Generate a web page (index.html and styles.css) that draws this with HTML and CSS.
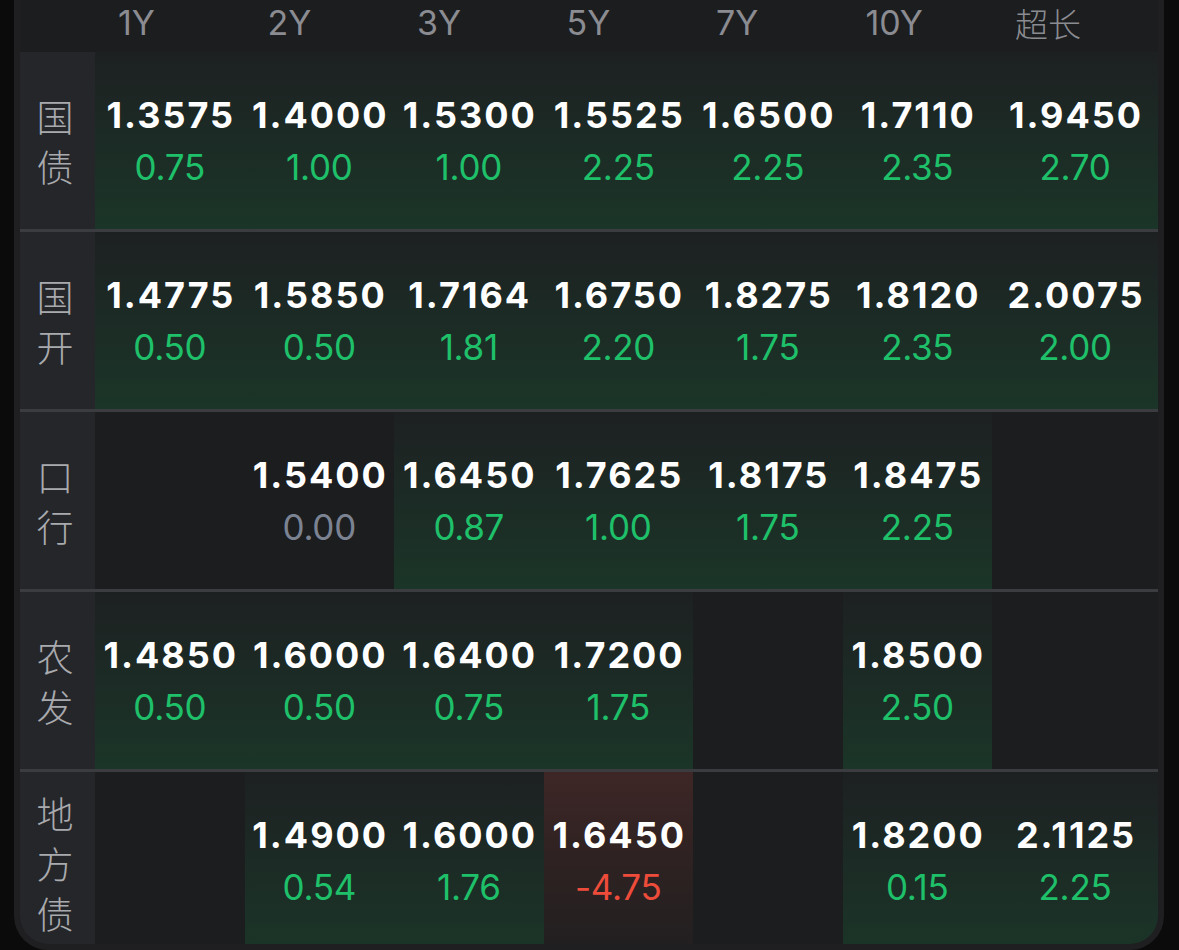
FILE: index.html
```html
<!DOCTYPE html>
<html lang="zh-CN">
<head>
<meta charset="utf-8">
<title>利率债收益率</title>
<link rel="stylesheet" href="styles.css">
</head>
<body>
<div class="card">
  <div class="head">
    <div class="hcell hlabel"></div>
    <div class="hcell">1Y</div>
    <div class="hcell">2Y</div>
    <div class="hcell">3Y</div>
    <div class="hcell">5Y</div>
    <div class="hcell">7Y</div>
    <div class="hcell">10Y</div>
    <div class="hcell cjk">超长</div>
  </div>

  <div class="row">
    <div class="label"><span>国</span><span>债</span></div>
    <div class="cell up"><span class="v">1.3575</span><span class="c pos">0.75</span></div>
    <div class="cell up"><span class="v">1.4000</span><span class="c pos">1.00</span></div>
    <div class="cell up"><span class="v">1.5300</span><span class="c pos">1.00</span></div>
    <div class="cell up"><span class="v">1.5525</span><span class="c pos">2.25</span></div>
    <div class="cell up"><span class="v">1.6500</span><span class="c pos">2.25</span></div>
    <div class="cell up"><span class="v">1.7110</span><span class="c pos">2.35</span></div>
    <div class="cell up"><span class="v">1.9450</span><span class="c pos">2.70</span></div>
  </div>

  <div class="row">
    <div class="label"><span>国</span><span>开</span></div>
    <div class="cell up"><span class="v">1.4775</span><span class="c pos">0.50</span></div>
    <div class="cell up"><span class="v">1.5850</span><span class="c pos">0.50</span></div>
    <div class="cell up"><span class="v">1.7164</span><span class="c pos">1.81</span></div>
    <div class="cell up"><span class="v">1.6750</span><span class="c pos">2.20</span></div>
    <div class="cell up"><span class="v">1.8275</span><span class="c pos">1.75</span></div>
    <div class="cell up"><span class="v">1.8120</span><span class="c pos">2.35</span></div>
    <div class="cell up"><span class="v">2.0075</span><span class="c pos">2.00</span></div>
  </div>

  <div class="row">
    <div class="label"><span>口</span><span>行</span></div>
    <div class="cell"></div>
    <div class="cell"><span class="v">1.5400</span><span class="c flat">0.00</span></div>
    <div class="cell up"><span class="v">1.6450</span><span class="c pos">0.87</span></div>
    <div class="cell up"><span class="v">1.7625</span><span class="c pos">1.00</span></div>
    <div class="cell up"><span class="v">1.8175</span><span class="c pos">1.75</span></div>
    <div class="cell up"><span class="v">1.8475</span><span class="c pos">2.25</span></div>
    <div class="cell"></div>
  </div>

  <div class="row">
    <div class="label"><span>农</span><span>发</span></div>
    <div class="cell up"><span class="v">1.4850</span><span class="c pos">0.50</span></div>
    <div class="cell up"><span class="v">1.6000</span><span class="c pos">0.50</span></div>
    <div class="cell up"><span class="v">1.6400</span><span class="c pos">0.75</span></div>
    <div class="cell up"><span class="v">1.7200</span><span class="c pos">1.75</span></div>
    <div class="cell"></div>
    <div class="cell up"><span class="v">1.8500</span><span class="c pos">2.50</span></div>
    <div class="cell"></div>
  </div>

  <div class="row last">
    <div class="label"><span>地</span><span>方</span><span>债</span></div>
    <div class="cell"></div>
    <div class="cell up"><span class="v">1.4900</span><span class="c pos">0.54</span></div>
    <div class="cell up"><span class="v">1.6000</span><span class="c pos">1.76</span></div>
    <div class="cell down"><span class="v">1.6450</span><span class="c neg">-4.75</span></div>
    <div class="cell"></div>
    <div class="cell up"><span class="v">1.8200</span><span class="c pos">0.15</span></div>
    <div class="cell up"><span class="v">2.1125</span><span class="c pos">2.25</span></div>
  </div>
</div>
</body>
</html>
```

FILE: styles.css
```css
* { box-sizing: border-box; }

html, body {
  margin: 0;
  padding: 0;
  background: #0b0b0c;
  height: 950px;
  overflow: hidden;
}

body {
  font-family: Inter, "Noto Sans CJK SC", sans-serif;
}

.card {
  margin-left: 14px;
  width: 1150px;
  height: 950px;
  border: 6px solid #1f1f21;
  border-top: none;
  border-radius: 0 0 34px 34px;
  background: #1c1d1f;
  overflow: hidden;
}

.head,
.row {
  display: grid;
  grid-template-columns: 75px repeat(6, 149.5px) 166px;
}

.head {
  height: 52px;
  background: #1c1d1f;
}

.hcell {
  padding-left: 23px;
  font-size: 34px;
  line-height: 45px;
  color: #8b8c91;
  font-weight: 400;
}

.hcell.cjk {
  font-family: "Noto Sans CJK SC", sans-serif;
  font-size: 33px;
  font-weight: 300;
  line-height: 46px;
}

.row {
  height: 180px;
  border-bottom: 3px solid #3b3c3f;
}

.row:first-of-type { height: 181px; }

.row.last {
  height: 182px;
  border-bottom: none;
}

.label {
  background: #25262a;
  display: flex;
  flex-direction: column;
  justify-content: center;
  align-items: center;
  padding-right: 5px;
  font-family: "Noto Sans CJK SC", sans-serif;
  font-size: 37px;
  font-weight: 300;
  line-height: 50px;
  color: #a9aaae;
}

.label span {
  display: block;
  height: 50px;
}

.cell {
  display: flex;
  flex-direction: column;
  align-items: center;
  padding-top: 37px;
  background: #1c1d1f;
}

.cell.up {
  background: linear-gradient(180deg, #1d2021 0%, #1c2a25 45%, #1b3528 100%);
}

.cell.down {
  background: linear-gradient(180deg, #3e2626 0%, #2e2222 50%, #211f20 100%);
}

.v {
  font-size: 36px;
  line-height: 52px;
  font-weight: 700;
  color: #ffffff;
  letter-spacing: 2px;
  padding-left: 2px;
}

.c {
  font-size: 35px;
  line-height: 52px;
  font-weight: 400;
  letter-spacing: -0.3px;
}

.c.pos { color: #1fc06a; }
.c.neg { color: #ee4c3a; }
.c.flat { color: #7b8393; }
```
